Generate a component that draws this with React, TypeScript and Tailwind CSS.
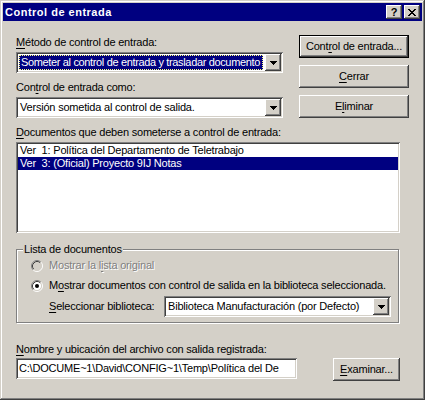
import React from "react"

const raised = "shadow-[inset_-1px_-1px_0_#404040,inset_1px_1px_0_#ffffff,inset_-2px_-2px_0_#808080,inset_2px_2px_0_#d4d0c8]"
const sunken = "shadow-[inset_1px_1px_0_#808080,inset_-1px_-1px_0_#ffffff,inset_2px_2px_0_#404040,inset_-2px_-2px_0_#d4d0c8]"

const U = ({ children }: { children: React.ReactNode }) => (
    <span className="underline underline-offset-[2px] decoration-1">{children}</span>
)

const Arrow = () => (
    <svg width="7" height="4" viewBox="0 0 7 4" shapeRendering="crispEdges">
        <path d="M0 0h7v1h-1v1h-1v1h-1v1h-1v-1h-1v-1h-1v-1h-1z" fill="#000" />
    </svg>
)

const Combo = ({ className, text, focused }: { className: string, text: string, focused?: boolean }) => (
    <div className={`h-[21px] bg-white p-[2px] flex ${sunken} ${className}`}>
        <div className="flex-1 min-w-0 flex p-[1px] pr-[2px]">
            {focused ? (
                <div className="flex-1 min-w-0 flex items-center bg-[#000080] text-white border border-dotted border-[#ffff7f] pl-[1px] overflow-hidden whitespace-nowrap tracking-[-0.35px]">
                    {text}
                </div>
            ) : (
                <div className="flex-1 min-w-0 flex items-center pl-[1px] overflow-hidden whitespace-nowrap">
                    {text}
                </div>
            )}
        </div>
        <div className={`w-[16px] h-[17px] shrink-0 bg-[#d4d0c8] flex items-center justify-center ${raised}`}>
            <Arrow />
        </div>
    </div>
)

const Button = ({ children, isDefault, className }: { children: React.ReactNode, isDefault?: boolean, className?: string }) => (
    isDefault ? (
        <div className={`h-[23px] border border-black bg-[#d4d0c8] ${className ?? ""}`}>
            <div className={`h-full flex items-center justify-center ${raised}`}>{children}</div>
        </div>
    ) : (
        <div className={`h-[23px] bg-[#d4d0c8] flex items-center justify-center ${raised} ${className ?? ""}`}>
            {children}
        </div>
    )
)

const Radio = ({ checked, disabled }: { checked?: boolean, disabled?: boolean }) => (
    <svg width="12" height="12" viewBox="0 0 12 12" className="shrink-0">
        <circle cx="6" cy="6" r="4.5" fill={disabled ? "#d4d0c8" : "#ffffff"} />
        <path d="M2.11 9.89A5.5 5.5 0 0 1 9.89 2.11" fill="none" stroke="#808080" strokeWidth="1" />
        <path d="M9.89 2.11A5.5 5.5 0 0 1 2.11 9.89" fill="none" stroke="#ffffff" strokeWidth="1" />
        <path d="M2.82 9.18A4.5 4.5 0 0 1 9.18 2.82" fill="none" stroke="#404040" strokeWidth="1" />
        <path d="M9.18 2.82A4.5 4.5 0 0 1 2.82 9.18" fill="none" stroke="#d4d0c8" strokeWidth="1" />
        {checked && <circle cx="6" cy="6" r="2" fill="#000" />}
    </svg>
)

export default function App() {
    return (
        <div className={`w-[425px] h-[400px] bg-[#d4d0c8] p-[3px] flex flex-col text-black text-[11px] leading-[13px] tracking-[-0.2px] font-['Liberation_Sans',Arial,sans-serif] shadow-[inset_-1px_-1px_0_#404040,inset_1px_1px_0_#d4d0c8,inset_-2px_-2px_0_#808080,inset_2px_2px_0_#ffffff]`}>
            {/* title bar */}
            <div className="h-[18px] bg-[#000080] flex items-center pl-[2px] pr-[2px]">
                <span className="flex-1 text-white font-bold tracking-[0.5px]">Control de entrada</span>
                <div className={`w-[16px] h-[14px] bg-[#d4d0c8] flex items-center justify-center font-bold text-[11px] leading-[11px] tracking-normal ${raised}`}>?</div>
                <div className={`ml-[2px] w-[16px] h-[14px] bg-[#d4d0c8] flex items-center justify-center ${raised}`}>
                    <svg width="8" height="7" viewBox="0 0 8 7" shapeRendering="crispEdges">
                        <path d="M0 0h2v1h1v1h2v-1h1v-1h2v1h-1v1h-1v1h-1v1h1v1h1v1h1v1h-2v-1h-1v-1h-2v1h-1v1h-2v-1h1v-1h1v-1h1v-1h-1v-1h-1v-1h-1z" fill="#000" />
                    </svg>
                </div>
            </div>

            <div className="flex-1 flex flex-col pl-[13px] pr-[13px] pt-[14px]">
                <div className="flex justify-between">
                    <div className="w-[267px] flex flex-col">
                        <div className="mt-[1px] h-[13px]"><U>M</U>étodo de control de entrada:</div>
                        <Combo className="mt-[3px]" focused text="Someter al control de entrada y trasladar documento" />
                        <div className="mt-[8px] h-[13px]">Con<U>t</U>rol de entrada como:</div>
                        <Combo className="mt-[3px]" text="Versión sometida al control de salida." />
                    </div>
                    <div className="w-[110px] flex flex-col gap-[7px]">
                        <Button isDefault>Cont<U>r</U>ol de entrada...</Button>
                        <Button><U>C</U>errar</Button>
                        <Button>E<U>l</U>iminar</Button>
                    </div>
                </div>

                <div className="mt-[8px] h-[13px]"><U>D</U>ocumentos que deben someterse a control de entrada:</div>
                <div className={`mt-[3px] w-[384px] h-[91px] bg-white p-[2px] ${sunken}`}>
                    <div className="h-[13px] pl-[2px] whitespace-pre">Ver  1: Política del Departamento de Teletrabajo</div>
                    <div className="h-[13px] pl-[2px] whitespace-pre bg-[#000080] text-white">Ver  3: (Oficial) Proyecto 9IJ Notas</div>
                </div>

                <div className="relative mt-[16px] w-[383px] border border-[#808080] shadow-[1px_1px_0_#ffffff,inset_1px_1px_0_#ffffff] pt-[9px] pb-[5px] pl-[14px]">
                    <span className="absolute -top-[7px] left-[6px] px-[1px] bg-[#d4d0c8]">Lista de documentos</span>
                    <div className="h-[13px] flex items-center">
                        <Radio disabled />
                        <span className="ml-[6px] text-[#808080] [text-shadow:1px_1px_0_#ffffff]">Mostrar la l<U>i</U>sta original</span>
                    </div>
                    <div className="mt-[7px] h-[13px] flex items-center">
                        <Radio checked />
                        <span className="ml-[6px] whitespace-nowrap">M<U>o</U>strar documentos con control de salida en la biblioteca seleccionada.</span>
                    </div>
                    <div className="mt-[4px] flex items-center pl-[18px]">
                        <span className="w-[115px] shrink-0"><U>S</U>eleccionar biblioteca:</span>
                        <Combo className="w-[227px]" text="Biblioteca Manufacturación (por Defecto)" />
                    </div>
                </div>

                <div className="mt-[20px] h-[13px]"><U>N</U>ombre y ubicación del archivo con salida registrada:</div>
                <div className="mt-[2px] w-[384px] flex items-start justify-between">
                    <div className={`w-[281px] h-[21px] bg-white flex items-center pl-[3px] pr-[2px] overflow-hidden whitespace-nowrap ${sunken}`}>
                        C:\DOCUME~1\David\CONFIG~1\Temp\Política del De
                    </div>
                    <Button className="w-[67px]"><U>E</U>xaminar...</Button>
                </div>
            </div>
        </div>
    )
}
